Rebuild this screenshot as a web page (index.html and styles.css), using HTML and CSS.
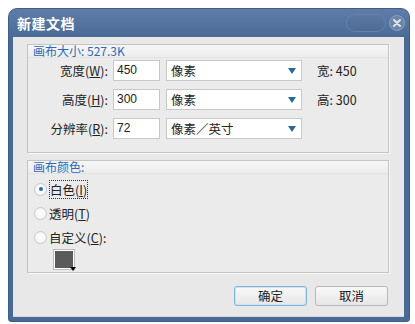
FILE: index.html
```html
<!DOCTYPE html>
<html>
<head>
<meta charset="utf-8">
<link rel="stylesheet" href="styles.css">
</head>
<body>
<div class="window">
  <div class="titlebar">
    <span class="title">新建文档</span>
    <span class="pill"></span>
    <span class="close">
      <svg width="16" height="16" viewBox="0 0 16 16"><circle cx="8" cy="8" r="7.5" fill="#6d86a8" stroke="#8aa0bf"/><path d="M5 5 L11 11 M11 5 L5 11" stroke="#dfe6f0" stroke-width="2" stroke-linecap="round"/></svg>
    </span>
  </div>
  <div class="content">
    <div class="group g1">
      <div class="ghead">画布大小: 527.3K</div>
      <div class="rows">
        <div class="row">
          <span class="lbl">宽度(<u>W</u>):</span>
          <span class="input">450</span>
          <span class="select">像素<i class="arrow"></i></span>
          <span class="info">宽: 450</span>
        </div>
        <div class="row">
          <span class="lbl">高度(<u>H</u>):</span>
          <span class="input">300</span>
          <span class="select">像素<i class="arrow"></i></span>
          <span class="info">高: 300</span>
        </div>
        <div class="row">
          <span class="lbl">分辨率(<u>R</u>):</span>
          <span class="input">72</span>
          <span class="select">像素／英寸<i class="arrow"></i></span>
        </div>
      </div>
    </div>
    <div class="group g2">
      <div class="ghead">画布颜色:</div>
      <div class="radios">
        <div class="radio"><span class="dot on"></span><span class="focus">白色(<u>I</u>)</span></div>
        <div class="radio"><span class="dot"></span><span>透明(<u>T</u>)</span></div>
        <div class="radio"><span class="dot"></span><span>自定义(<u>C</u>):</span></div>
        <div class="swatch"><i class="tri"></i></div>
      </div>
    </div>
    <div class="buttons">
      <span class="btn default">确定</span>
      <span class="btn">取消</span>
    </div>
  </div>
</div>
</body>
</html>
```
FILE: styles.css
```css
* { box-sizing: border-box; }
body {
  margin: 0;
  background: #fff;
  font-family: "Noto Sans CJK SC", "Liberation Sans", sans-serif;
  font-size: 12px;
  color: #222;
}
.window {
  margin: 8px 0 0 8px;
  width: 402px;
  height: 314px;
  background: linear-gradient(#5e7ea9, #4a6a96 30px, #4a6a96);
  border-radius: 9px 9px 3px 3px;
  display: flex;
  flex-direction: column;
  border: 1px solid #3f5f8a;
}
.titlebar {
  height: 28px;
  display: flex;
  align-items: center;
  padding: 0 4px 0 8px;
}
.title {
  color: #fff;
  font-weight: bold;
  font-size: 14px;
  flex: 1;
  letter-spacing: 0.5px;
}
.pill {
  width: 40px;
  height: 18px;
  border-radius: 9px;
  background: linear-gradient(#5b79a2, #4d6b94);
  box-shadow: inset 0 0 0 1px #6482ab;
  margin-right: 3px;
}
.close { display: flex; }
.content {
  flex: 1;
  margin: 0 5px 4px 4px;
  background: #e8e8e8;
  padding: 7px 15px 0 14px;
  display: flex;
  flex-direction: column;
  border-bottom: 1px solid #d8d8d8;
}
.group {
  border: 1px solid #c4c4c4;
  background: #ebebeb;
  box-shadow: 1px 1px 0 #f8f8f8;
}
.g1 { height: 109px; }
.g2 { height: 113px; margin-top: 7px; }
.ghead {
  height: 13px;
  line-height: 12px;
  color: #2a69b8;
  padding-left: 5px;
  background: linear-gradient(#f6f6f6, #ededed);
  border-bottom: 1px solid #e2e2e2;
}
.rows {
  display: flex;
  flex-direction: column;
  gap: 8px;
  padding-top: 2px;
}
.row {
  display: flex;
  align-items: center;
  height: 21px;
}
.lbl {
  width: 80px;
  text-align: right;
  margin-right: 5px;
  font-size: 12.5px;
}
.input {
  width: 47px;
  height: 21px;
  background: #fff;
  border: 1px solid #c8c8c8;
  padding-left: 3px;
  line-height: 19px;
  font-family: "Liberation Sans", sans-serif;
  font-size: 12px;
  margin-right: 6px;
}
.select {
  width: 136px;
  height: 21px;
  background: #fff;
  border: 1px solid #c8c8c8;
  padding-left: 4px;
  line-height: 19px;
  font-size: 12.5px;
  display: flex;
  align-items: center;
  justify-content: space-between;
  padding-right: 5px;
  margin-right: 15px;
}
.arrow {
  width: 0;
  height: 0;
  border-left: 4.5px solid transparent;
  border-right: 4.5px solid transparent;
  border-top: 6px solid #2a6a9a;
}
.info { font-size: 12.5px; }
.radios {
  display: flex;
  flex-direction: column;
  padding: 6px 0 0 6px;
  gap: 6px;
}
.radio {
  display: flex;
  align-items: center;
  height: 18px;
  font-size: 12.5px;
}
.dot {
  width: 13px;
  height: 13px;
  border-radius: 50%;
  border: 1px solid #c8c8c8;
  background: radial-gradient(#fff, #f0f0f0);
  margin-right: 2px;
  position: relative;
}
.dot.on::after {
  content: "";
  position: absolute;
  left: 3.5px;
  top: 3.5px;
  width: 4px;
  height: 4px;
  border-radius: 50%;
  background: #2a6ab8;
}
.focus {
  outline: 1px dotted #333;
  outline-offset: -1px;
  padding: 0 1px;
}
.swatch {
  width: 20px;
  height: 19px;
  background: #5a5a5a;
  border: 1px solid #fff;
  box-shadow: 0 0 0 1px #bdbdbd;
  margin-left: 20px;
  margin-top: -2px;
  position: relative;
}
.tri {
  position: absolute;
  right: -3px;
  bottom: -3px;
  width: 0;
  height: 0;
  border-left: 3px solid transparent;
  border-right: 3px solid transparent;
  border-top: 4px solid #000;
}
.buttons {
  display: flex;
  justify-content: flex-end;
  gap: 8px;
  margin-top: 13px;
  padding-right: 1px;
}
.btn {
  width: 73px;
  height: 20px;
  border: 1px solid #b8b8b8;
  border-radius: 3px;
  background: linear-gradient(#f8f8f8, #e6e6e6);
  text-align: center;
  line-height: 18px;
  font-size: 12.5px;
}
.btn.default {
  border-color: #7fb3d8;
  box-shadow: inset 0 0 0 1px #cfe4f3;
}
```
